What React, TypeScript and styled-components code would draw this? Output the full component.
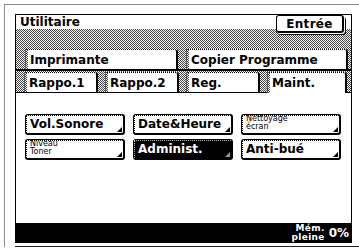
import React from 'react';
import styled, { createGlobalStyle, css } from 'styled-components';

const Global = createGlobalStyle`
  html, body { margin: 0; padding: 0; background: #fff; }
  body { width: 359px; height: 248px; overflow: hidden; font-family: "DejaVu Sans", "Liberation Sans", sans-serif; }
`;

const dither = css`
  background-color: #fff;
  background-image: repeating-conic-gradient(#444 0 25%, #fafafa 0 50%);
  background-size: 2px 2px;
`;

const Frame = styled.div`
  margin: 4px 0 0 4px;
  border-left: 1px solid #8a8a8a;
  border-top: 1px solid #8a8a8a;
  padding: 9px 0 0 10px;
  display: flex;
  flex-direction: column;
`;

const Panel = styled.div`
  width: 337px;
  height: 229px;
  box-sizing: border-box;
  border: 1px solid #000;
  border-bottom: none;
  display: flex;
  flex-direction: column;
  position: relative;
`;

const BaseLine = styled.div`
  margin-top: 3px;
  width: 344px;
  height: 1px;
  background: #222;
`;

const TitleBar = styled.div`
  height: 14px;
  padding-left: 4px;
  font-weight: bold;
  font-size: 12px;
  line-height: 14px;
  background: #fff;
`;

const EnterButton = styled.div`
  position: absolute;
  right: 7px;
  top: 0px;
  width: 68px;
  height: 18px;
  box-sizing: border-box;
  background: #fff;
  border: 1px solid #000;
  border-right-width: 2px;
  border-bottom-width: 2px;
  border-radius: 3px;
  box-shadow: 1px 1px 0 #fff, 2px 2px 0 #000;
  font-weight: bold;
  font-size: 12px;
  letter-spacing: 0.3px;
  display: flex;
  align-items: center;
  justify-content: center;
`;

const TopBank = styled.div`
  ${dither};
  height: 40px;
  box-sizing: border-box;
  display: flex;
  align-items: flex-end;
  gap: 8px;
  padding: 0 0 0 9px;
`;

const TabRow = styled.div`
  ${dither};
  border-top: 2px solid #000;
  height: 24px;
  box-sizing: border-box;
  display: flex;
  align-items: flex-end;
  gap: 7px;
  padding: 0 0 0 8px;
  border-bottom: 1px solid #000;
`;

const Tab = styled.div<{ $w: number; $active?: boolean; $h?: number }>`
  width: ${p => p.$w}px;
  height: ${p => p.$h ?? 20}px;
  box-sizing: border-box;
  background: #fff;
  border-top: 1px dotted #000;
  border-left: 1px solid #555;
  border-right: 2px solid #000;
  border-top-right-radius: 3px;
  position: relative;
  padding-left: 4px;
  font-weight: bold;
  font-size: 12px;
  display: flex;
  align-items: center;
  margin-bottom: ${p => (p.$active ? '-1px' : '0')};
  &::before {
    content: '';
    position: absolute;
    left: 0;
    top: 0;
    bottom: 0;
    width: 2px;
    ${dither};
  }
`;

const Content = styled.div`
  flex: 1;
  background: #fff;
  display: grid;
  grid-template-columns: repeat(3, 100px);
  grid-auto-rows: 21px;
  column-gap: 8px;
  row-gap: 4px;
  align-content: start;
  padding: 21px 0 0 9px;
`;

const Btn = styled.div<{ $dark?: boolean }>`
  box-sizing: border-box;
  border: 1px solid #000;
  border-right-width: 2px;
  border-bottom-width: 2px;
  border-radius: 3px;
  background: ${p => (p.$dark ? '#000' : '#fff')};
  color: ${p => (p.$dark ? '#fff' : '#000')};
  display: flex;
  align-items: center;
  padding-left: 4px;
  font-weight: bold;
  font-size: 12px;
  position: relative;
  &::before {
    content: '';
    position: absolute;
    left: 0;
    top: 0;
    right: 0;
    bottom: 0;
    border-top: 1px dotted ${p => (p.$dark ? '#bbb' : '#000')};
    border-left: 1px dotted ${p => (p.$dark ? '#bbb' : '#000')};
  }
  &::after {
    content: '';
    position: absolute;
    right: 1px;
    bottom: 1px;
    width: 0;
    height: 0;
    border-left: 5px solid transparent;
    border-bottom: 5px solid ${p => (p.$dark ? '#999' : '#000')};
  }
`;

const Small = styled.span`
  font-size: 8px;
  line-height: 8px;
  font-weight: normal;
  display: block;
  margin-top: -2px;
`;

const Footer = styled.div`
  height: 20px;
  background: #000;
  color: #fff;
  display: flex;
  align-items: center;
  justify-content: flex-end;
  gap: 4px;
  padding-right: 2px;
`;

const MemLabel = styled.div`
  font-size: 9px;
  line-height: 9px;
  font-weight: bold;
  text-align: right;
  letter-spacing: 0.3px;
`;

const Percent = styled.div`
  font-size: 12px;
  font-weight: bold;
`;

export default function App() {
  return (
    <>
      <Global />
      <Frame>
        <Panel>
          <TitleBar>Utilitaire</TitleBar>
          <EnterButton>Entrée</EnterButton>
          <TopBank>
            <Tab $w={153}>Imprimante</Tab>
            <Tab $w={162}>Copier Programme</Tab>
          </TopBank>
          <TabRow>
            <Tab $w={74}>Rappo.1</Tab>
            <Tab $w={74}>Rappo.2</Tab>
            <Tab $w={74}>Reg.</Tab>
            <Tab $w={80} $active $h={21}>Maint.</Tab>
          </TabRow>
          <Content>
            <Btn>Vol.Sonore</Btn>
            <Btn>Date&amp;Heure</Btn>
            <Btn><Small>Nettoyage<br />écran</Small></Btn>
            <Btn><Small>Niveau<br />Toner</Small></Btn>
            <Btn $dark>Administ.</Btn>
            <Btn>Anti-bué</Btn>
          </Content>
          <Footer>
            <MemLabel>Mém.<br />pleine</MemLabel>
            <Percent>0%</Percent>
          </Footer>
        </Panel>
        <BaseLine />
      </Frame>
    </>
  );
}
